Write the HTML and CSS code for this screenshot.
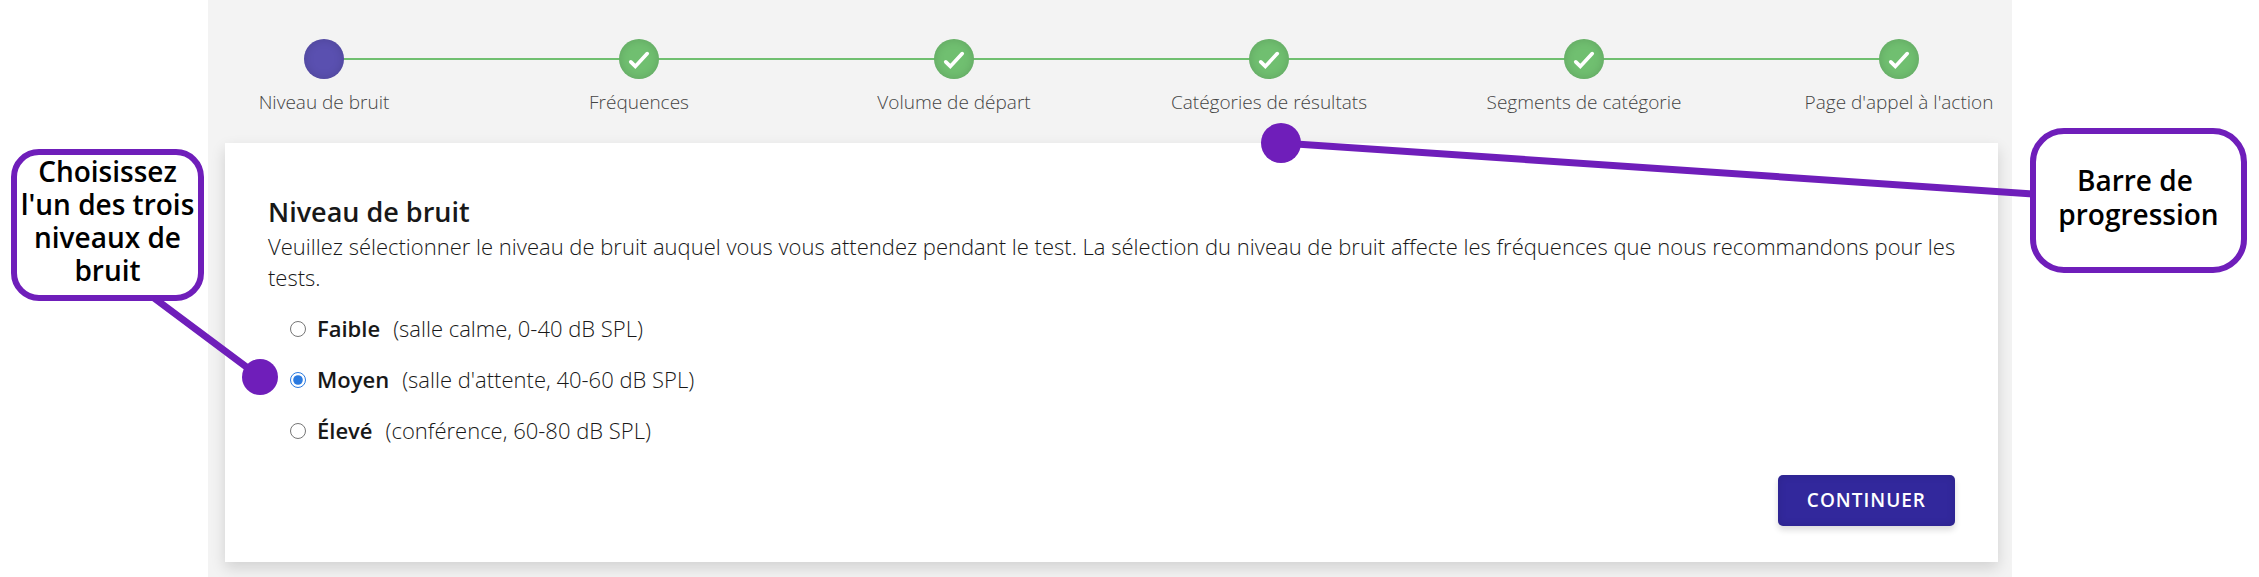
FILE: index.html
```html
<!DOCTYPE html>
<html lang="fr">
<head>
<meta charset="utf-8">
<title>Niveau de bruit</title>
<link rel="stylesheet" href="styles.css">
</head>
<body>
<div class="page">
  <aside class="side side-left">
    <p class="callout callout-left">Choisissez l'un des trois niveaux de bruit</p>
  </aside>
  <main class="panel">
    <ol class="steps">
      <li class="step"><span class="dot current"></span><span class="step-label">Niveau de bruit</span></li>
      <li class="step"><span class="dot"><svg class="check" viewBox="0 0 24 24"><path d="M3 14L8 19L21 5"/></svg></span><span class="step-label">Fréquences</span></li>
      <li class="step"><span class="dot"><svg class="check" viewBox="0 0 24 24"><path d="M3 14L8 19L21 5"/></svg></span><span class="step-label">Volume de départ</span></li>
      <li class="step"><span class="dot"><svg class="check" viewBox="0 0 24 24"><path d="M3 14L8 19L21 5"/></svg></span><span class="step-label">Catégories de résultats</span></li>
      <li class="step"><span class="dot"><svg class="check" viewBox="0 0 24 24"><path d="M3 14L8 19L21 5"/></svg></span><span class="step-label">Segments de catégorie</span></li>
      <li class="step"><span class="dot"><svg class="check" viewBox="0 0 24 24"><path d="M3 14L8 19L21 5"/></svg></span><span class="step-label">Page d'appel à l'action</span></li>
    </ol>
    <form class="card">
      <h1 class="title">Niveau de bruit</h1>
      <p class="intro">Veuillez sélectionner le niveau de bruit auquel vous vous attendez pendant le test. La sélection du niveau de bruit affecte les fréquences que nous recommandons pour les tests.</p>
      <div class="options" role="radiogroup" aria-label="Niveau de bruit">
        <label class="option"><input class="radio" type="radio" name="noise"><strong class="level">Faible</strong><span>(salle calme, 0-40 dB SPL)</span></label>
        <label class="option"><input class="radio" type="radio" name="noise" checked><strong class="level">Moyen</strong><span>(salle d'attente, 40-60 dB SPL)</span></label>
        <label class="option"><input class="radio" type="radio" name="noise"><strong class="level">Élevé</strong><span>(conférence, 60-80 dB SPL)</span></label>
      </div>
      <button class="continue" type="button">CONTINUER</button>
    </form>
  </main>
  <aside class="side side-right">
    <p class="callout callout-right">Barre de&nbsp; progression</p>
  </aside>
  <svg class="connectors" viewBox="0 0 2259 577" aria-hidden="true">
    <path d="M154 298L260 377M2033 194L1281 143"/>
    <circle cx="260" cy="377" r="18"/>
    <circle cx="1281" cy="143" r="20"/>
  </svg>
</div>
</body>
</html>
```
FILE: styles.css
```css
* {
  box-sizing: border-box;
}

body {
  margin: 0;
  background: #fff;
  color: #181818;
  font-family: "Open Sans", "Noto Sans", sans-serif;
  font-size: 22px;
  font-weight: 300;
  line-height: 31px;
}

.page {
  position: relative;
  display: grid;
  grid-template-columns: 208fr 1804fr 247fr;
  min-height: 100vh;
}

.side {
  display: flex;
  flex-direction: column;
}

.side-left {
  padding: 149px 4px 0 11px;
}

.side-right {
  padding: 128px 12px 0 18px;
}

.callout {
  display: flex;
  align-items: center;
  justify-content: center;
  margin: 0;
  border: 6px solid #6f1eba;
  background: #fff;
  color: #000;
  font-size: 28px;
  font-weight: 600;
  line-height: 34px;
  text-align: center;
}

.callout-left {
  padding: 0 0 8px;
  border-radius: 28px;
  line-height: 33px;
}

.callout-right {
  min-height: 145px;
  padding: 0 20px 8px;
  border-radius: 34px;
}

.panel {
  padding: 39px 14px 15px 17px;
  background: #f3f3f3;
}

.steps {
  display: flex;
  justify-content: space-between;
  margin: 0;
  padding: 0;
  background: linear-gradient(#70bf70, #70bf70) 50% 19px / calc(100% - 198px) 2px no-repeat;
  list-style: none;
}

.step {
  display: flex;
  flex: 0 0 198px;
  flex-direction: column;
  align-items: center;
}

.dot {
  display: flex;
  align-items: center;
  justify-content: center;
  width: 40px;
  height: 40px;
  border-radius: 50%;
  background: #70bf70;
  box-shadow: inset 0 0 10px rgba(0, 0, 0, 0.15);
}

.current {
  background: #5a50b0;
}

.check {
  width: 24px;
  height: 24px;
  padding-top: 2px;
  fill: none;
  stroke: #fff;
  stroke-width: 4;
  stroke-linecap: round;
}

.step-label {
  margin-top: 10px;
  color: #444;
  font-size: 19px;
  line-height: 26px;
  white-space: nowrap;
}

.card {
  display: flex;
  flex-direction: column;
  margin-top: 28px;
  padding: 50px 43px 36px;
  background: #fff;
  box-shadow: 0 6px 14px rgba(0, 0, 0, 0.14);
}

.title {
  margin: 0;
  font-size: 27px;
  font-weight: 600;
  line-height: 38px;
}

.intro {
  margin: 0 -20px 0 0;
}

.options {
  display: flex;
  flex-direction: column;
  gap: 20px;
  margin-top: 20px;
  padding-left: 22px;
}

.option {
  display: flex;
  align-items: center;
}

.radio {
  width: 16px;
  height: 16px;
  margin: 0 11px 0 0;
  accent-color: #2a7ae0;
}

.level {
  margin-right: 13px;
  font-weight: 600;
}

.continue {
  align-self: flex-end;
  height: 51px;
  margin-top: 29px;
  padding: 0 29px 2px;
  border: 0;
  border-radius: 5px;
  background: #32289c;
  box-shadow: 0 4px 6px rgba(0, 0, 0, 0.14), inset 0 0 8px rgba(0, 0, 0, 0.12);
  color: #fff;
  font-family: inherit;
  font-size: 19px;
  font-weight: 600;
  letter-spacing: 1px;
}

.connectors {
  position: absolute;
  top: 0;
  left: 0;
  width: 100%;
  fill: #6f1eba;
  pointer-events: none;
}

.connectors path {
  fill: none;
  stroke: #6f1eba;
  stroke-width: 7;
}
```
